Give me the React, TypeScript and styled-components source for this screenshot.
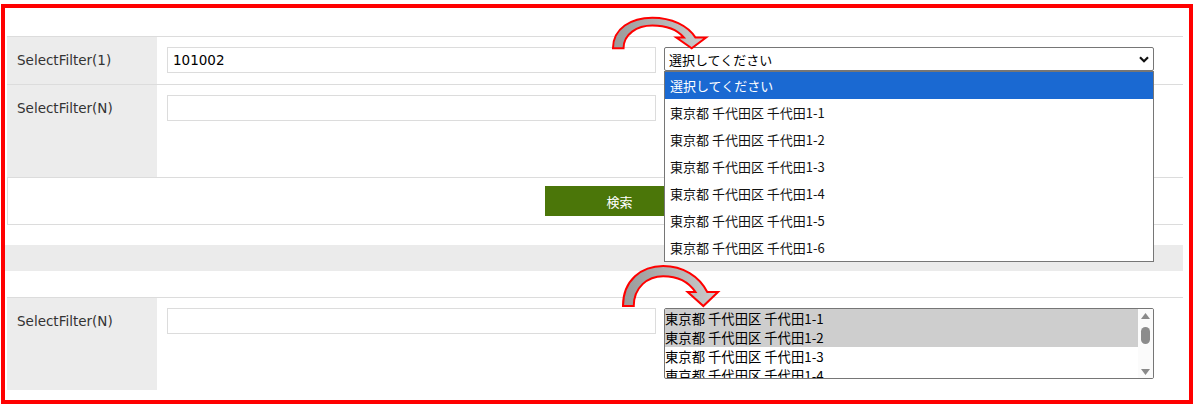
import React from 'react';
import styled, { createGlobalStyle } from 'styled-components';

const Colors = {
  frame: '#ff0000',
  line: '#dcdcdc',
  labelBg: '#ececec',
  labelText: '#333333',
  control: '#767676',
  active: '#1a69d2',
  picked: '#cecece',
  button: '#4b7609',
};

const GlobalStyle = createGlobalStyle`
  * { box-sizing: border-box; }
  body {
    margin: 0;
    background: #fff;
    font-family: 'DejaVu Sans', 'Noto Sans CJK JP', sans-serif;
    color: #000;
  }
`;

const Frame = styled.div`
  position: relative;
  margin: 4px 1px 0 1px;
  height: 400px;
  border: 4px solid ${Colors.frame};
  padding: 28px 6px 0 0;
  background: #fff;
`;

const FormTable = styled.div`
  margin-left: 2px;
  border-top: 1px solid ${Colors.line};
`;

const Row = styled.div<{ $last?: boolean }>`
  display: grid;
  grid-template-columns: 150px 1fr;
  border-bottom: ${p => (p.$last ? 'none' : `1px solid ${Colors.line}`)};
`;

const Label = styled.div`
  background: ${Colors.labelBg};
  padding: 10px 10px;
  font-size: 13.5px;
  line-height: 26px;
  color: ${Colors.labelText};
`;

const Value = styled.div`
  display: flex;
  align-items: flex-start;
  gap: 8px;
  padding: 10px 10px 11px;
`;

const TextInput = styled.input`
  width: 489px;
  height: 26px;
  border: 1px solid ${Colors.line};
  padding: 0 5px;
  font-family: 'DejaVu Sans', sans-serif;
  font-size: 13.5px;
  color: #000;
  outline: none;
`;

const SelectWrap = styled.div`
  position: relative;
  width: 490px;
`;

const SelectBox = styled.div`
  display: flex;
  align-items: center;
  justify-content: space-between;
  height: 24px;
  border: 1px solid ${Colors.control};
  border-radius: 2px;
  padding: 0 4px;
  font-family: 'Noto Sans CJK JP', sans-serif;
  font-size: 13px;
  color: #000;
`;

const Popup = styled.div`
  position: absolute;
  top: 24px;
  left: 0;
  width: 490px;
  border: 1px solid ${Colors.control};
  background: #fff;
  z-index: 5;
`;

const PopupItem = styled.div<{ $active?: boolean }>`
  height: 27px;
  line-height: 27px;
  padding: 0 5px;
  font-family: 'Noto Sans CJK JP', sans-serif;
  font-size: 13px;
  background: ${p => (p.$active ? Colors.active : '#fff')};
  color: ${p => (p.$active ? '#fff' : '#111')};
`;

const ListBox = styled.div`
  display: flex;
  width: 490px;
  height: 71px;
  border: 1px solid ${Colors.control};
  border-radius: 2px;
  overflow: hidden;
`;

const ListItems = styled.div`
  flex: 1;
  overflow: hidden;
`;

const ListItem = styled.div<{ $picked?: boolean }>`
  height: 19px;
  line-height: 19px;
  font-family: 'Noto Sans CJK JP', sans-serif;
  font-size: 13.33px;
  white-space: nowrap;
  background: ${p => (p.$picked ? Colors.picked : 'transparent')};
  color: #000;
`;

const ScrollBar = styled.div`
  position: relative;
  width: 15px;
  background: #fbfbfb;
  display: flex;
  flex-direction: column;
  align-items: center;
  justify-content: space-between;
  padding: 4px 0 3px;
`;

const Thumb = styled.div`
  position: absolute;
  top: 18px;
  left: 3px;
  width: 9px;
  height: 17px;
  border-radius: 5px;
  background: #8c8c8c;
`;

const ButtonRow = styled.div`
  display: flex;
  justify-content: center;
  padding: 8px 0 8px 48px;
  border-left: 1px solid ${Colors.line};
  border-bottom: 1px solid ${Colors.line};
`;

const SearchButton = styled.button`
  width: 150px;
  height: 30px;
  border: none;
  background: ${Colors.button};
  color: #fff;
  font-family: 'Noto Sans CJK JP', sans-serif;
  font-size: 13px;
  cursor: pointer;
`;

const Band = styled.div`
  height: 26px;
  margin: 20px 0 26px;
  background: #ebebeb;
`;

const Arrow = styled.svg<{ $left: number; $top: number }>`
  position: absolute;
  left: ${p => p.$left}px;
  top: ${p => p.$top}px;
  overflow: visible;
  z-index: 6;
`;

const addresses = [1, 2, 3, 4, 5, 6].map(n => `東京都 千代田区 千代田1-${n}`);

const CurvedArrow: React.FC<{ left: number; top: number; w: number; h: number; id: string }> = ({ left, top, w, h, id }) => (
  <Arrow $left={left} $top={top} width={w} height={h} viewBox="0 0 100 45" preserveAspectRatio="none">
    <defs>
      <linearGradient id={id} x1="0" x2="1" y1="0" y2="0">
        <stop offset="0" stopColor="#9a9a9a" />
        <stop offset="1" stopColor="#cbcbcb" />
      </linearGradient>
    </defs>
    <path
      d="M1,44 C1,16 20,1 42,1 C62,1 79,12 87,29 L98,29 L83,44 L67,29 L75,29 C68,18 56,12 42,12 C26,12 12,24 12,44 Z"
      fill={`url(#${id})`}
      stroke={Colors.frame}
      strokeWidth={2}
      vectorEffect="non-scaling-stroke"
      strokeLinejoin="miter"
    />
  </Arrow>
);

const Chevron = () => (
  <svg width="10" height="7" viewBox="0 0 10 7">
    <path d="M1 1.2 L5 5.2 L9 1.2" fill="none" stroke="#111" strokeWidth="2.2" />
  </svg>
);

const Triangle: React.FC<{ down?: boolean }> = ({ down }) => (
  <svg width="9" height="6" viewBox="0 0 9 6">
    <path d={down ? 'M0 0 L9 0 L4.5 6 Z' : 'M0 6 L9 6 L4.5 0 Z'} fill="#8a8a8a" />
  </svg>
);

const MultiList: React.FC<{ items: string[]; picked: number[] }> = ({ items, picked }) => (
  <ListBox>
    <ListItems>
      {items.map((a, i) => (
        <ListItem key={a} $picked={picked.includes(i)}>{a}</ListItem>
      ))}
    </ListItems>
    <ScrollBar>
      <Triangle />
      <Thumb />
      <Triangle down />
    </ScrollBar>
  </ListBox>
);

const App: React.FC = () => (
  <>
    <GlobalStyle />
    <Frame>
      <FormTable>
        <Row>
          <Label>SelectFilter(1)</Label>
          <Value>
            <TextInput defaultValue="101002" />
            <SelectWrap>
              <SelectBox>
                <span>選択してください</span>
                <Chevron />
              </SelectBox>
              <Popup>
                <PopupItem $active>選択してください</PopupItem>
                {addresses.map(a => (
                  <PopupItem key={a}>{a}</PopupItem>
                ))}
              </Popup>
            </SelectWrap>
          </Value>
        </Row>
        <Row>
          <Label>SelectFilter(N)</Label>
          <Value>
            <TextInput />
            {/* sits under the open popup, so its options are left out */}
            <MultiList items={[]} picked={[]} />
          </Value>
        </Row>
        <ButtonRow>
          <SearchButton>検索</SearchButton>
        </ButtonRow>
      </FormTable>

      <Band />

      <FormTable>
        <Row $last>
          <Label>SelectFilter(N)</Label>
          <Value>
            <TextInput />
            <MultiList items={addresses} picked={[0, 1]} />
          </Value>
        </Row>
      </FormTable>

      <CurvedArrow id="arrowTop" left={607} top={9} w={96} h={32} />
      <CurvedArrow id="arrowBottom" left={617} top={257} w={98} h={42} />
    </Frame>
  </>
);

export default App;
